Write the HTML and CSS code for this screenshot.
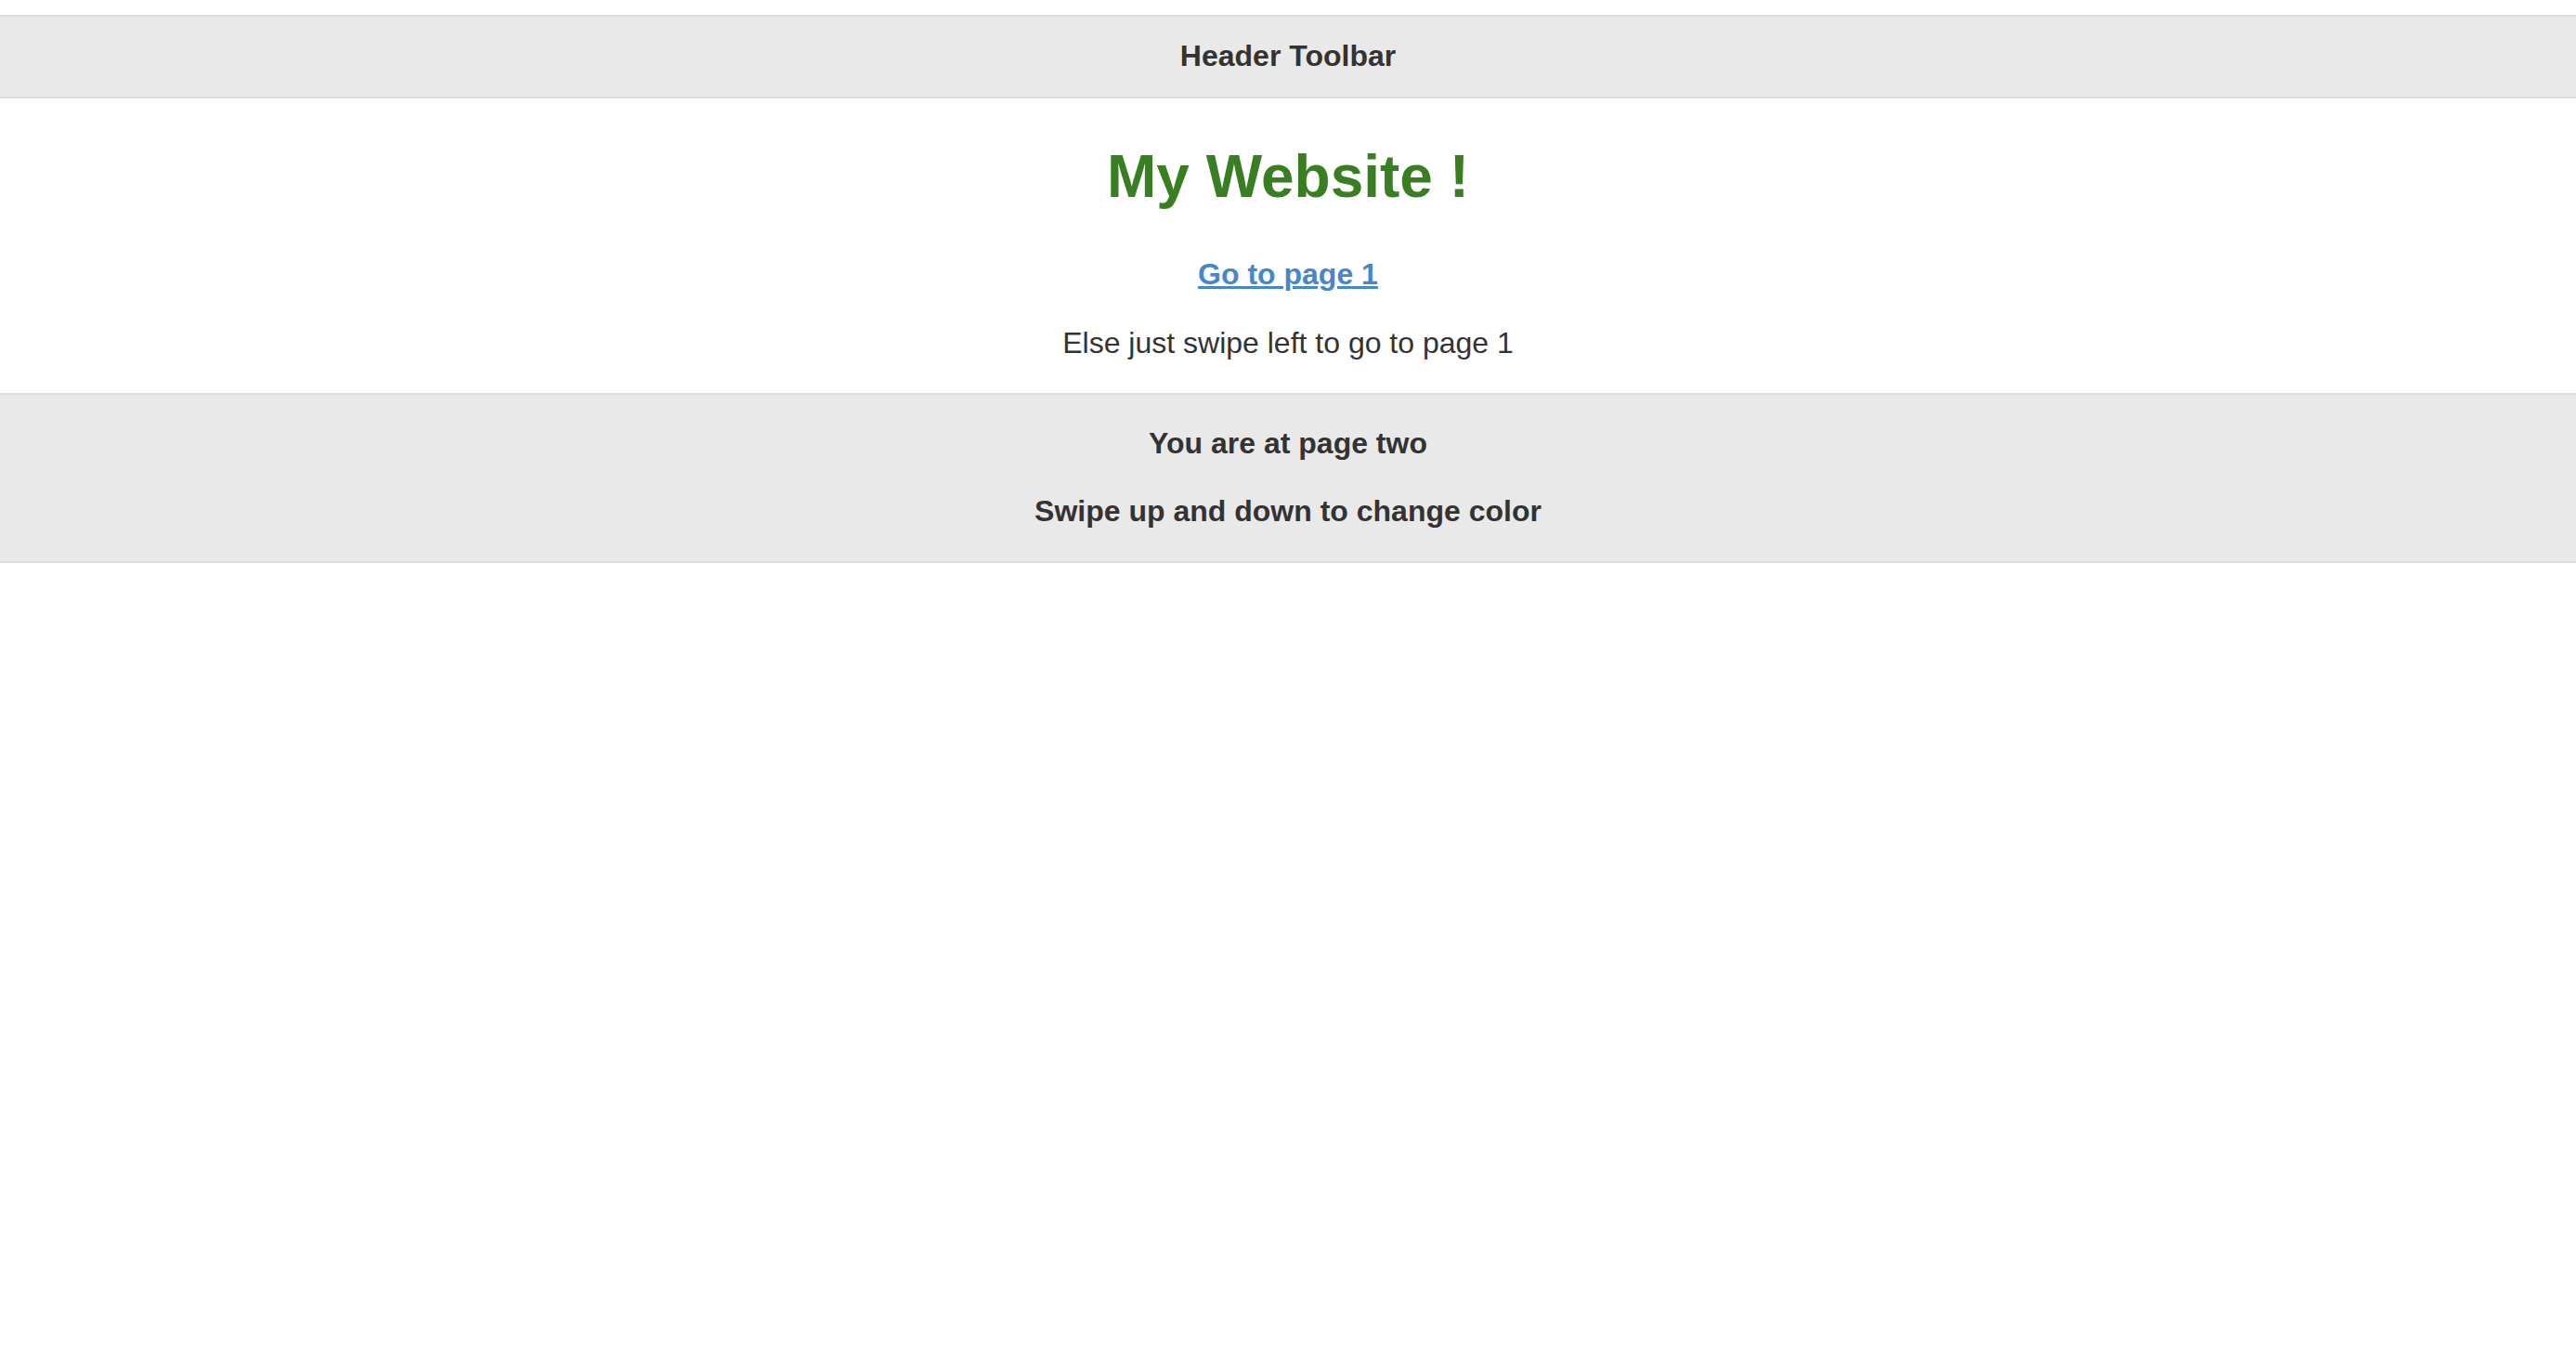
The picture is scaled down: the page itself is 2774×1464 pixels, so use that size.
FILE: index.html
```html
<!DOCTYPE html>
<html lang="en">
<head>
<meta charset="utf-8">
<title>My Website</title>
<link rel="stylesheet" href="styles.css">
</head>
<body>
<div class="page">
  <header class="toolbar toolbar-header">
    <h1 class="toolbar-title">Header Toolbar</h1>
  </header>
  <main class="content">
    <h1 class="site-title">My Website !</h1>
    <p class="line"><a class="page-link" href="#page1">Go to page 1</a></p>
    <p class="line">Else just swipe left to go to page 1</p>
  </main>
  <footer class="toolbar toolbar-footer">
    <h3 class="footer-line">You are at page two</h3>
    <h3 class="footer-line">Swipe up and down to change color</h3>
  </footer>
</div>
</body>
</html>
```
FILE: styles.css
```css
html, body {
  margin: 0;
  padding: 0;
  background: #ffffff;
}
body {
  font-family: "Liberation Sans", Arial, sans-serif;
  font-size: 32px;
  line-height: 1.3;
  color: #333333;
}
.page {
  padding-top: 16px;
}
.toolbar {
  background: #e9e9e9;
  border-top: 2px solid #dddddd;
  border-bottom: 2px solid #dddddd;
  text-align: center;
  color: #333333;
}
.toolbar-title {
  margin: 0 30%;
  padding: 22.4px 0;
  font-size: 32px;
  font-weight: bold;
  line-height: 41.6px;
}
.content {
  text-align: center;
  display: flow-root;
}
.site-title {
  margin: 42.88px 0;
  font-size: 64px;
  font-weight: bold;
  line-height: 83.2px;
  color: #3a7e23;
}
.line {
  margin: 32px 0;
  line-height: 41.6px;
}
.page-link {
  color: #4686c9;
  font-weight: bold;
  text-decoration: underline;
  text-decoration-thickness: 3px;
}
.toolbar-footer {
  display: flow-root;
}
.footer-line {
  margin: 32px 0;
  font-size: 32px;
  font-weight: bold;
  line-height: 41.6px;
}
```
